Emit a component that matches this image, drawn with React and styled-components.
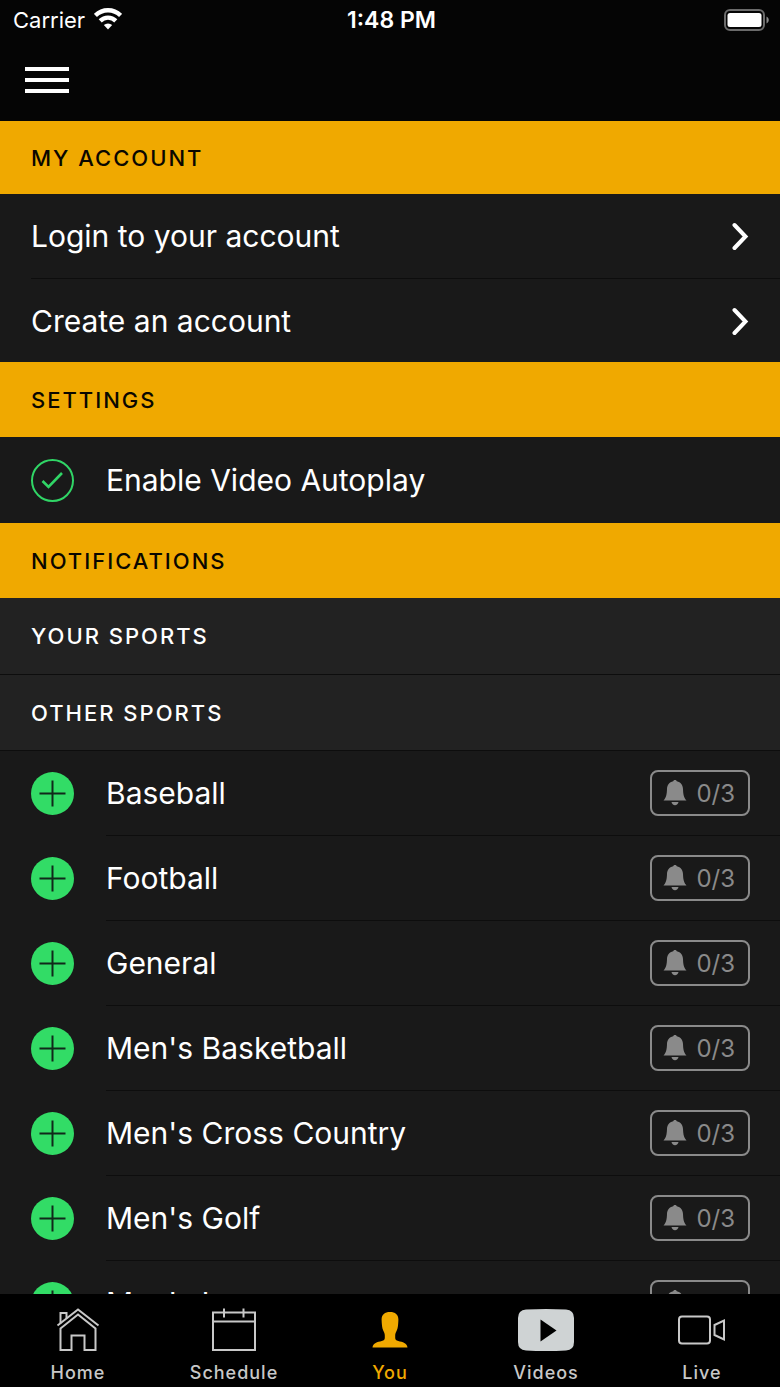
import React, { useState } from "react";
import styled, { createGlobalStyle } from "styled-components";

const GlobalStyle = createGlobalStyle`
  * { box-sizing: border-box; }
  body {
    margin: 0;
    background: #000;
    color: #fff;
    font-family: Inter, "Liberation Sans", sans-serif;
  }
  button { font: inherit; color: inherit; }
`;

const Screen = styled.div`
  display: flex;
  flex-direction: column;
  height: 100vh;
  overflow: hidden;
`;

const StatusBar = styled.header`
  display: grid;
  grid-template-columns: 1fr auto 1fr;
  align-items: center;
  flex: none;
  height: 39px;
  padding: 0 10px 0 13px;
  background: #050505;
  font-size: 22px;
`;

const Carrier = styled.div`
  display: flex;
  align-items: center;
  gap: 9px;
`;

const Clock = styled.time`
  font-size: 23px;
  font-weight: 600;
`;

const Battery = styled.svg`
  justify-self: end;
`;

const NavBar = styled.div`
  display: flex;
  align-items: center;
  flex: none;
  height: 82px;
  padding: 0 25px;
  background: #050505;
`;

const MenuButton = styled.button`
  display: flex;
  padding: 0;
  border: 0;
  background: none;
  cursor: pointer;
`;

const Content = styled.main`
  flex: 1;
  min-height: 0;
  overflow-x: hidden;
  overflow-y: auto;
  scrollbar-width: none;
  background: #191919;
`;

const SectionTitle = styled.h2`
  display: flex;
  align-items: center;
  height: ${(p) => (p.$first ? 73 : 75)}px;
  margin: 0;
  padding: 0 31px;
  background: #f0a900;
  color: #0a0700;
  font-size: 22px;
  font-weight: 500;
  letter-spacing: 2px;
`;

const SubTitle = styled.h3`
  display: flex;
  align-items: center;
  height: 76px;
  margin: 0;
  padding: 0 31px;
  background: #222;
  font-size: 22px;
  font-weight: 500;
  letter-spacing: 2px;

  & + & {
    border-top: 1px solid #0d0d0d;
  }
`;

const List = styled.ul`
  margin: 0;
  padding: 0;
  border-top: 1px solid #0d0d0d;
  list-style: none;
`;

const LinkRow = styled.a`
  display: flex;
  align-items: center;
  justify-content: space-between;
  height: 84px;
  margin-left: 31px;
  padding-right: 31px;
  color: #fff;
  font-size: 30px;
  text-decoration: none;

  & + & {
    border-top: 1px solid #0d0d0d;
  }
`;

const ToggleRow = styled.label`
  display: flex;
  align-items: center;
  gap: 32px;
  height: 86px;
  padding: 0 31px;
  font-size: 30px;
  cursor: pointer;
`;

const CheckBox = styled.input`
  appearance: none;
  flex: none;
  width: 43px;
  height: 43px;
  margin: 0;
  border: 2px solid #30d566;
  border-radius: 50%;
  background: url("data:image/svg+xml,%3Csvg xmlns='http://www.w3.org/2000/svg' viewBox='0 0 39 39'%3E%3Cpath d='M9.500 20l6 6 13.500-14' fill='none' stroke='%2330d566' stroke-width='2.600'/%3E%3C/svg%3E") center / 39px 39px no-repeat;
  &:not(:checked) { background: none; }
`;

const SportRow = styled.li`
  display: flex;
  gap: 32px;
  padding-left: 31px;
`;

const SportBody = styled.div`
  display: flex;
  flex: 1;
  align-items: center;
  justify-content: space-between;
  height: 85px;
  padding-right: 30px;
  border-bottom: 1px solid #0d0d0d;
  font-size: 30px;
`;

const AddButton = styled.button`
  display: flex;
  align-self: center;
  padding: 0;
  border: 0;
  background: none;
  cursor: pointer;
`;

const AlertButton = styled.button`
  display: flex;
  align-items: center;
  justify-content: space-between;
  width: 100px;
  height: 46px;
  padding: 0 13px 0 11px;
  border: 2px solid #8a8a8a;
  border-radius: 8px;
  background: none;
  color: #8a8a8a;
  font-size: 24px;
  cursor: pointer;
`;

const TabBar = styled.nav`
  display: grid;
  grid-template-columns: repeat(5, 1fr);
  flex: none;
  height: 93px;
  background: #000;
`;

const Tab = styled.a`
  display: flex;
  flex-direction: column;
  align-items: center;
  gap: 8px;
  padding-top: 13px;
  color: ${(p) => (p.$active ? "#f0a900" : "#c8c8c8")};
  font-size: 18px;
  font-weight: 500;
  line-height: 24px;
  letter-spacing: 1px;
  text-decoration: none;
`;

const WifiIcon = () => (
  <svg width="28" height="24" viewBox="0 0 28 24" fill="none" stroke="#fff" strokeWidth="4.4">
    <path d="M1.4 7.4a18 18 0 0 1 25.2 0" />
    <path d="M6.2 12.8a11.2 11.2 0 0 1 15.6 0" />
    <path d="M14 21.500l-4.200-4.400a6 6 0 0 1 8.400 0z" fill="#fff" stroke="none" />
  </svg>
);

const BatteryIcon = () => (
  <Battery width="46" height="22" viewBox="0 0 46 22" role="img" aria-label="Battery full">
    <rect x="1" y="1" width="39" height="20" rx="5" fill="none" stroke="#6b6b6b" strokeWidth="2" />
    <rect x="3.5" y="4" width="34" height="14" rx="2.5" fill="#fff" />
    <path d="M42.500 7.500c3 1.500 3 5.500 0 7z" fill="#8a8a8a" />
  </Battery>
);

const MenuIcon = () => (
  <svg width="44" height="26" viewBox="0 0 44 26" fill="#fff">
    <rect width="44" height="4" />
    <rect y="11" width="44" height="4" />
    <rect y="22" width="44" height="4" />
  </svg>
);

const ChevronIcon = () => (
  <svg width="18" height="28" viewBox="0 0 18 28" fill="none" stroke="#fff" strokeWidth="4">
    <path d="M3.500 3L14.500 14.500 3.500 26" strokeLinecap="round" />
  </svg>
);

const PlusIcon = () => (
  <svg width="43" height="43" viewBox="0 0 43 43">
    <circle cx="21.5" cy="21.5" r="21.5" fill="#32dc66" />
    <path d="M8.5 21.5h26M21.5 8.5v26" stroke="#10291a" strokeWidth="2" />
  </svg>
);

const BellIcon = () => (
  <svg width="24" height="26" viewBox="0 0 24 26" fill="currentColor">
    <path d="M12 0c1 0 1.700.7 1.800 1.200C17.800 2.200 19.800 5 20 9c.2 5.500.8 8.400 3.500 11.600H.5C3.200 17.400 3.800 14.500 4 9c.2-4 2.200-6.800 6.200-7.800C10.300.7 11 0 12 0z" />
    <path d="M8.500 22h7c-.3 2-1.700 3.200-3.500 3.200S8.800 24 8.500 22z" />
  </svg>
);

const HomeIcon = () => (
  <svg width="44" height="46" viewBox="0 0 44 46" fill="none" stroke="currentColor" strokeWidth="2">
    <path d="M1.500 18.500L22 2.500l20.500 16" />
    <path d="M4.500 21.500L22 7.500l17.500 14V43H28.500V28.500h-13V43H4.500z" />
    <path d="M4.500 16.500V6h6V11.500" />
  </svg>
);

const CalendarIcon = () => (
  <svg width="44" height="46" viewBox="0 0 44 46" fill="none" stroke="currentColor" strokeWidth="2">
    <path d="M1 5.500h42V43H1zM1 14.500h42M12 1.500v9M31.500 1.500v9" />
  </svg>
);

const PersonIcon = () => (
  <svg width="36" height="46" viewBox="0 0 36 46" fill="currentColor">
    <path d="M18 5c5.200 0 8.400 2.600 8.400 7.500 0 2-.2 3.500-.3 5-.2 3-.8 5-1.800 7-.7 1.500-1.100 2.500-1.100 4V31c0 1.500 1 2.500 3 3 4.500 1 8.800 2.200 9.300 6.500H.5C1 36.200 5.300 35 9.800 34c2-.5 3-1.500 3-3v-2.500c0-1.500-.4-2.500-1.100-4-1-2-1.600-4-1.800-7-.1-1.500-.3-3-.3-5C9.600 7.600 12.800 5 18 5z" />
  </svg>
);

const VideosIcon = () => (
  <svg width="56" height="46" viewBox="0 0 56 46">
    <path fill="#cfd3d4" d="M8 2.500Q28 1.500 48 2.500 56 3 56 11 56.500 23 56 35 56 43 48 43.500 28 44.500 8 43.500 0 43 0 35-.5 23 0 11 0 3 8 2.500z" />
    <path d="M22.500 12.500v22L38.500 23.500z" fill="#000" />
  </svg>
);

const LiveIcon = () => (
  <svg width="48" height="46" viewBox="0 0 48 46" fill="none" stroke="currentColor" strokeWidth="2">
    <rect x="1" y="9.500" width="31" height="27" rx="3" />
    <path d="M36.500 18l9.500-4.500v19L36.500 28z" />
  </svg>
);

const sports = [
  "Baseball",
  "Football",
  "General",
  "Men's Basketball",
  "Men's Cross Country",
  "Men's Golf",
  "Men's Lacrosse",
];

const tabs = [
  { name: "Home", Icon: HomeIcon },
  { name: "Schedule", Icon: CalendarIcon },
  { name: "You", Icon: PersonIcon },
  { name: "Videos", Icon: VideosIcon },
  { name: "Live", Icon: LiveIcon },
];

const App = () => {
  const [autoplay, setAutoplay] = useState(true);
  const [active, setActive] = useState("You");

  return (
    <Screen>
      <GlobalStyle />
      <StatusBar>
        <Carrier>
          Carrier
          <WifiIcon />
        </Carrier>
        <Clock>1:48 PM</Clock>
        <BatteryIcon />
      </StatusBar>
      <NavBar>
        <MenuButton aria-label="Menu">
          <MenuIcon />
        </MenuButton>
      </NavBar>
      <Content>
        <SectionTitle $first>MY ACCOUNT</SectionTitle>
        <LinkRow href="#login">
          Login to your account
          <ChevronIcon />
        </LinkRow>
        <LinkRow href="#create">
          Create an account
          <ChevronIcon />
        </LinkRow>
        <SectionTitle>SETTINGS</SectionTitle>
        <ToggleRow>
          <CheckBox
            type="checkbox"
            checked={autoplay}
            onChange={(e) => setAutoplay(e.target.checked)}
          />
          Enable Video Autoplay
        </ToggleRow>
        <SectionTitle>NOTIFICATIONS</SectionTitle>
        <SubTitle>YOUR SPORTS</SubTitle>
        <SubTitle>OTHER SPORTS</SubTitle>
        <List>
          {sports.map((sport) => (
            <SportRow key={sport}>
              <AddButton aria-label={`Add ${sport}`}>
                <PlusIcon />
              </AddButton>
              <SportBody>
                {sport}
                <AlertButton>
                  <BellIcon />
                  0/3
                </AlertButton>
              </SportBody>
            </SportRow>
          ))}
        </List>
      </Content>
      <TabBar>
        {tabs.map(({ name, Icon }) => (
          <Tab
            key={name}
            href={`#${name.toLowerCase()}`}
            $active={name === active}
            onClick={() => setActive(name)}
          >
            <Icon />
            {name}
          </Tab>
        ))}
      </TabBar>
    </Screen>
  );
};

export default App;
